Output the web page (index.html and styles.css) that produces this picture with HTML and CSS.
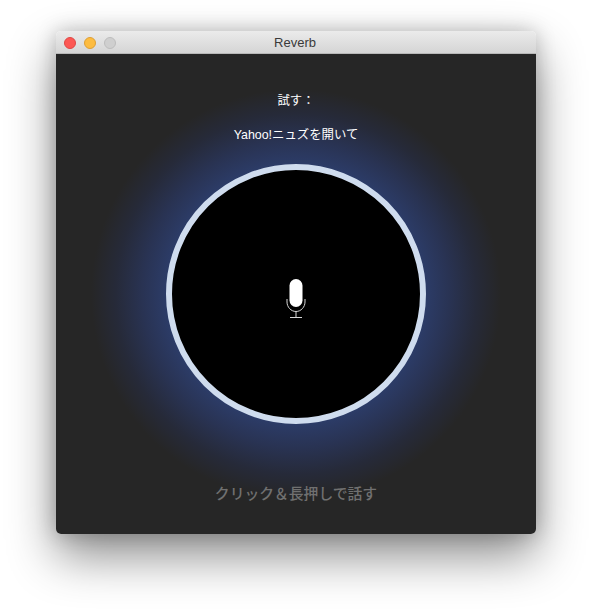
FILE: index.html
```html
<!DOCTYPE html>
<html lang="ja">
<head>
<meta charset="utf-8">
<title>Reverb</title>
<link rel="stylesheet" href="styles.css">
</head>
<body>
<div class="window">
  <header class="titlebar">
    <div class="lights">
      <span class="light light-close"></span>
      <span class="light light-min"></span>
      <span class="light light-max"></span>
    </div>
    <div class="title">Reverb</div>
  </header>
  <main class="content">
    <p class="hint">試す：</p>
    <p class="hint hint-cmd">Yahoo!ニュズを開いて</p>
    <div class="mic-button">
      <svg class="mic" width="20" height="40" viewBox="0 0 20 40" aria-hidden="true">
        <rect x="3.5" y="0" width="13" height="28" rx="6.5" fill="#fff"/>
        <path d="M1 20V23C1 28 5 32.5 10 32.5C15 32.5 19 28 19 23V20" fill="none" stroke="#d8d8d8" stroke-width="1"/>
        <path d="M10 32.5V38.5M4 38.5H16" fill="none" stroke="#d8d8d8" stroke-width="1"/>
      </svg>
    </div>
    <p class="prompt">クリック＆長押しで話す</p>
  </main>
</div>
</body>
</html>
```
FILE: styles.css
```css
* { box-sizing: border-box; }
html, body { margin: 0; height: 100%; }
body {
  background: #fff;
  overflow: hidden;
  padding: 31px 0 0 56px;
  font-family: "Liberation Sans", "Noto Sans CJK JP", sans-serif;
}
.window {
  width: 480px;
  height: 503px;
  border-radius: 5px;
  overflow: hidden;
  display: flex;
  flex-direction: column;
  box-shadow: 0 22px 48px rgba(0, 0, 0, 0.45), 0 0 20px rgba(0, 0, 0, 0.22);
}
.titlebar {
  height: 23px;
  flex: none;
  position: relative;
  display: flex;
  align-items: center;
  justify-content: center;
  background: linear-gradient(#ebebeb, #d5d5d5);
  border-bottom: 1px solid #b8b8b8;
}
.lights {
  position: absolute;
  left: 8px;
  top: 6px;
  display: flex;
  gap: 8px;
}
.light {
  width: 12px;
  height: 12px;
  border-radius: 50%;
  border: 1px solid;
}
.light-close { background: #fc5753; border-color: #df4744; }
.light-min { background: #fdbc40; border-color: #de9f34; }
.light-max { background: #cfcfcf; border-color: #bdbdbd; }
.title {
  font-size: 13px;
  color: #3a3a3a;
  margin-left: -2px;
}
.content {
  flex: 1;
  background: radial-gradient(circle 205px at 240px 240px, #2c3c68 63%, #293353 75%, #262a39 88%, #262626 100%);
  display: flex;
  flex-direction: column;
  align-items: center;
  overflow: hidden;
}
.hint {
  margin: 38px 0 0;
  height: 18px;
  line-height: 18px;
  font-size: 12.4px;
  color: #fff;
}
.hint-cmd { margin-top: 16px; }
.mic-button {
  margin-top: 20px;
  width: 260px;
  height: 260px;
  flex: none;
  border-radius: 50%;
  background: #000;
  border: 6px solid #cfdcee;
  display: flex;
  align-items: center;
  justify-content: center;
}
.mic { display: block; margin-top: 9px; }
.prompt {
  margin: 60px 0 0;
  height: 20px;
  line-height: 20px;
  font-size: 14.8px;
  font-weight: 500;
  color: #707070;
}
```
